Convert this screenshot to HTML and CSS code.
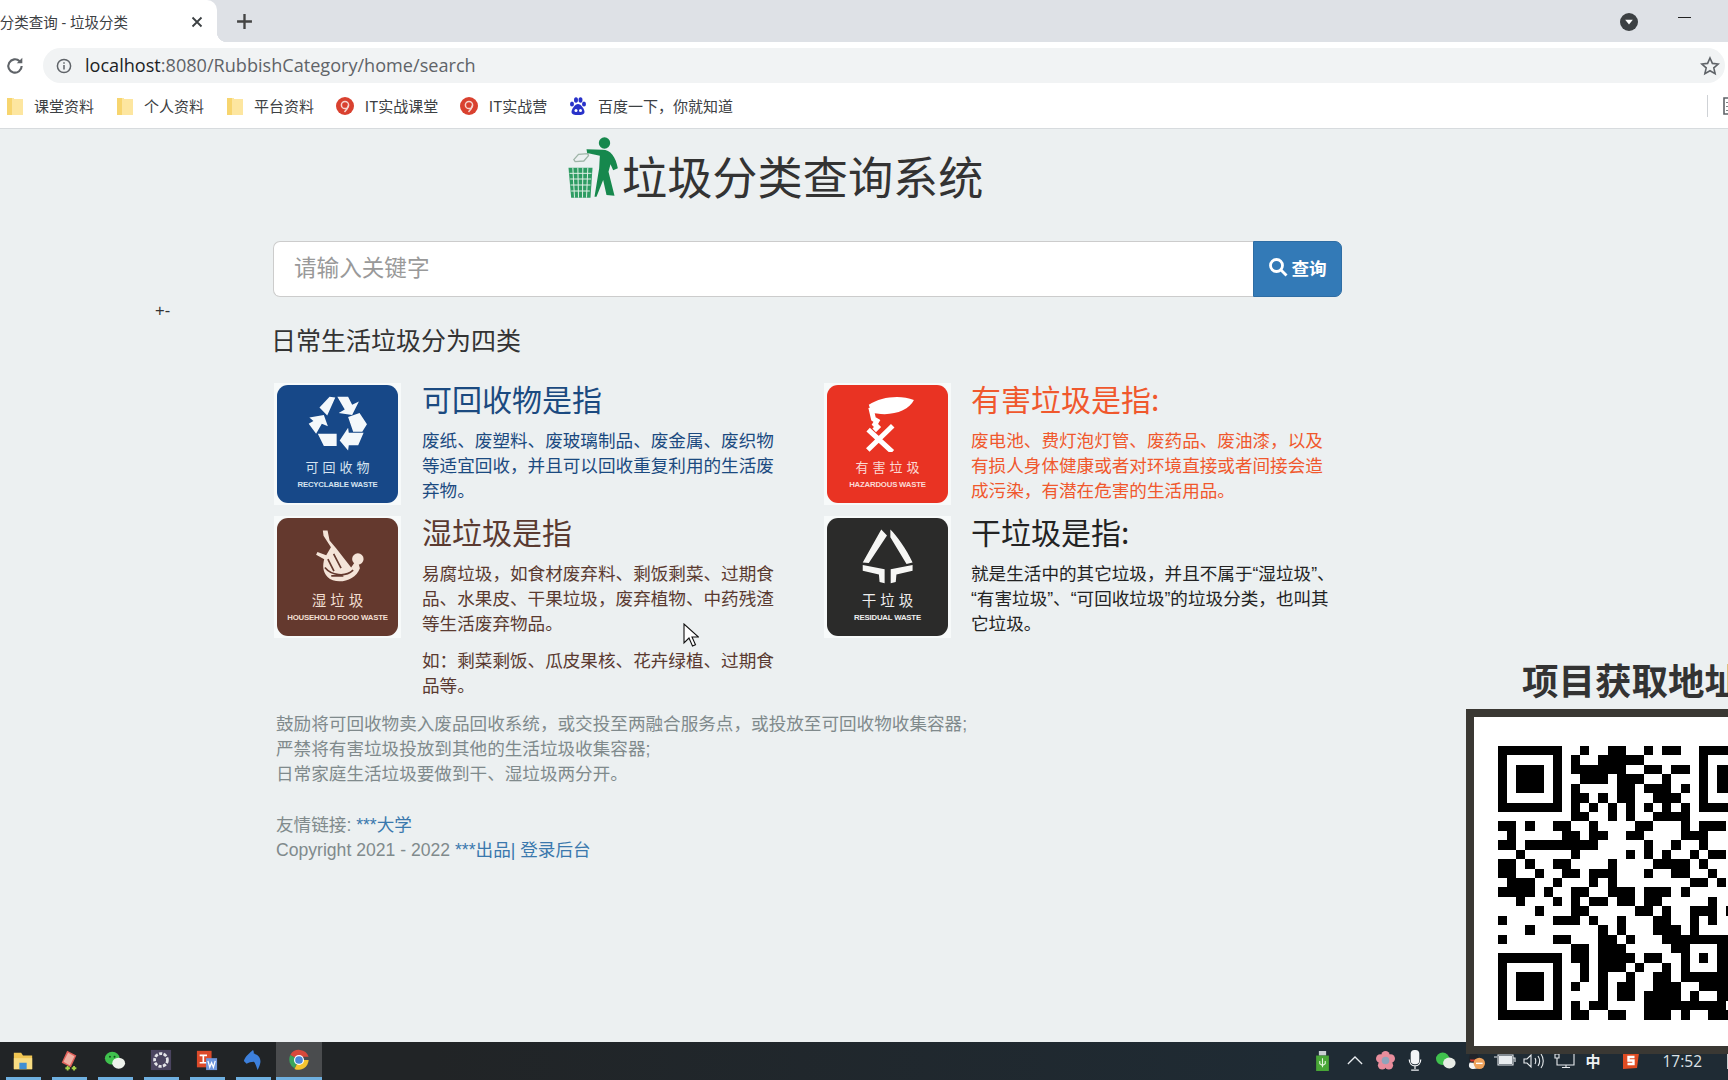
FILE: index.html
```html
<!DOCTYPE html>
<html lang="zh-CN">
<head>
<meta charset="utf-8">
<title>垃圾分类查询 - 垃圾分类</title>
<link rel="stylesheet" href="styles.css">
</head>
<body>
<div class="screen">
  <div class="tabstrip">
    <div class="tab">
      <span class="tab-title">垃圾分类查询 - 垃圾分类</span>
      <svg class="tab-close" viewBox="0 0 12 12"><path d="M1.5 1.5l9 9M10.5 1.5l-9 9"/></svg>
    </div>
    <svg class="tab-new" viewBox="0 0 16 16"><path d="M8 1v14M1 8h14"/></svg>
    <div class="strip-right">
      <svg class="profile" viewBox="0 0 18 18"><circle cx="9" cy="9" r="9" fill="#3c4043"/><path d="M5.2 6.8h7.6L9 11.6z" fill="#fff"/></svg>
      <span class="minimize"></span>
    </div>
  </div>

  <div class="toolbar">
    <svg class="reload" viewBox="0 0 18 18"><path d="M15 9a6 6 0 1 1-1.8-4.3" /><path class="solid" d="M15.6 1.6v5h-5z"/></svg>
    <div class="omnibox">
      <svg class="info" viewBox="0 0 16 16"><circle cx="8" cy="8" r="6.6"/><path d="M8 7v4.6M8 4.2v1.6"/></svg>
      <span class="url"><span class="host">localhost</span>:8080/RubbishCategory/home/search</span>
      <svg class="star" viewBox="0 0 20 20"><path d="M10 2l2.4 5.4 5.8.6-4.4 3.9 1.3 5.8L10 14.7l-5.1 3 1.3-5.8L1.8 8l5.8-.6z"/></svg>
    </div>
  </div>

  <div class="bookmarks">
    <a class="bm"><svg class="bm-folder" viewBox="0 0 16 18"><path d="M0 1h7v1h9v16H0z" fill="#fde6a0"/><path d="M0 1h5v17H0z" fill="#f7d56f"/></svg>课堂资料</a>
    <a class="bm"><svg class="bm-folder" viewBox="0 0 16 18"><path d="M0 1h7v1h9v16H0z" fill="#fde6a0"/><path d="M0 1h5v17H0z" fill="#f7d56f"/></svg>个人资料</a>
    <a class="bm"><svg class="bm-folder" viewBox="0 0 16 18"><path d="M0 1h7v1h9v16H0z" fill="#fde6a0"/><path d="M0 1h5v17H0z" fill="#f7d56f"/></svg>平台资料</a>
    <a class="bm"><svg class="bm-icon" viewBox="0 0 18 18"><circle cx="9" cy="9" r="9" fill="#d9412f"/><circle cx="9" cy="8" r="3.6" fill="none" stroke="#f6d5cf" stroke-width="1.5"/><path d="M12.5 8.500C12 11 10.500 13 8.500 15" fill="none" stroke="#f6d5cf" stroke-width="1.5"/></svg>IT实战课堂</a>
    <a class="bm"><svg class="bm-icon" viewBox="0 0 18 18"><circle cx="9" cy="9" r="9" fill="#d9412f"/><circle cx="9" cy="8" r="3.6" fill="none" stroke="#f6d5cf" stroke-width="1.5"/><path d="M12.5 8.500C12 11 10.500 13 8.500 15" fill="none" stroke="#f6d5cf" stroke-width="1.5"/></svg>IT实战营</a>
    <a class="bm"><svg class="bm-icon" viewBox="0 0 18 18"><g fill="#2932c9"><ellipse cx="3" cy="7" rx="2" ry="2.6"/><ellipse cx="7" cy="3" rx="2" ry="2.8"/><ellipse cx="11.5" cy="3" rx="2" ry="2.8"/><ellipse cx="15" cy="7" rx="2" ry="2.6"/><path d="M9 7c3 0 6.500 5 6.500 8 0 2.500-3 3-6.500 3s-6.500-.5-6.500-3c0-3 3.500-8 6.500-8z"/></g><circle cx="7" cy="13.500" r="1.500" fill="#fff"/><circle cx="11.500" cy="13.500" r="1.500" fill="#fff"/></svg>百度一下，你就知道</a>
    <span class="bm-sep"></span>
    <svg class="bm-list" viewBox="0 0 14 18"><path d="M1 1h18v16H1zM4 5v1M4 9v1M4 13v1"/></svg>
  </div>

  <main class="page">
    <aside class="stray">+-</aside>
    <div class="content">
      <header class="brand">
        <svg class="brand-logo" viewBox="80 30 155 195">
          <path d="M100 104l14-16 28-2 2 6-14 16-26 2z" fill="none" stroke="#9fb5a8" stroke-width="4"/>
          <path d="M84 128h72l-6 90H92z" fill="#2e9c63"/>
          <path d="M97 128l5 90M112 128l2 90M127 128l-1 90M142 128l-4 90M87 145h66M89 162h63M90 180h60M92 198h56" stroke="#dff0e6" stroke-width="3"/>
          <circle cx="192" cy="54" r="17" fill="#16884d"/>
          <path d="M138 73L186 74C210 74 226 95 232 130L218 136 210 118 204 140 222 212 198 210 188 165 168 215 162 215 176 130 178 92 140 84Z" fill="#16884d"/>
        </svg>
        <h1 class="brand-title">垃圾分类查询系统</h1>
      </header>

      <form class="search">
        <input class="search-input" type="text" placeholder="请输入关键字">
        <button class="search-btn" type="button">
          <svg viewBox="0 0 20 20"><circle cx="8.500" cy="8.500" r="6"/><path d="M13 13l5.500 5.500"/></svg>查询
        </button>
      </form>

      <h2 class="intro">日常生活垃圾分为四类</h2>

      <section class="grid">
        <article class="item item-blue">
          <div class="thumb"><div class="sign sign-blue">
            <svg class="picto" viewBox="125 60 190 172"><path fill="#f4f8fb" d="M165 100L195 68 212 70 188 124ZM218 68L250 68 262 92 282 82 262 122 222 116 240 106ZM250 128L284 116 306 150 292 172 265 172ZM296 175L252 175 250 160 225 198 250 228 252 212 280 212ZM160 178L216 178 216 214 178 214ZM135 130L178 122 190 156 172 148 155 178 133 148 147 140Z"/></svg>
            <div class="sign-cn">可回收物</div><div class="sign-en">RECYCLABLE WASTE</div>
          </div></div>
          <div class="item-body">
            <h3>可回收物是指</h3>
            <p>废纸、废塑料、废玻璃制品、废金属、废织物等适宜回收，并且可以回收重复利用的生活废弃物。</p>
          </div>
        </article>

        <article class="item item-red">
          <div class="thumb"><div class="sign sign-red">
            <svg class="picto" viewBox="130 60 190 172"><path fill="#fff" d="M168 92C205 68 262 62 302 78 288 108 240 126 192 118L176 116Z"/><path d="M174 100l8 34 10 6-6 10 8 8-10 10M165 226l74-72M166 166l72 66" stroke="#fff" stroke-width="15" fill="none"/></svg>
            <div class="sign-cn">有害垃圾</div><div class="sign-en">HAZARDOUS WASTE</div>
          </div></div>
          <div class="item-body">
            <h3>有害垃圾是指:</h3>
            <p>废电池、费灯泡灯管、废药品、废油漆，以及有损人身体健康或者对环境直接或者间接会造成污染，有潜在危害的生活用品。</p>
          </div>
        </article>

        <article class="item item-brown">
          <div class="thumb"><div class="sign sign-brown">
            <svg class="picto" viewBox="130 455 190 172"><g fill="#f4e4d8"><circle cx="284" cy="550" r="17"/><path d="M180 465l14 0 6 30 20 24 44 56 18-26 8 28c-14 40-72 50-96 26-16-16-14-36-10-52l-24-14 4-8 26 10 14-24-22-34z"/></g><path d="M186 575c20 24 60 30 84 8M212 535l22 42M195 550l18 36M205 600h36" stroke="#64392e" stroke-width="5" fill="none"/></svg>
            <div class="sign-cn sign-cn-wide">湿垃圾</div><div class="sign-en">HOUSEHOLD FOOD WASTE</div>
          </div></div>
          <div class="item-body">
            <h3>湿垃圾是指</h3>
            <p>易腐垃圾，如食材废弃料、剩饭剩菜、过期食品、水果皮、干果垃圾，废弃植物、中药残渣等生活废弃物品。</p>
            <p>如：剩菜剩饭、瓜皮果核、花卉绿植、过期食品等。</p>
          </div>
        </article>

        <article class="item item-dark">
          <div class="thumb"><div class="sign sign-dark">
            <svg class="picto" viewBox="130 465 190 172"><path fill="#f6f6f4" d="M205 472L222 490 168 572 150 570ZM232 472C250 490 280 530 298 570L280 575 232 495ZM150 578L215 590 215 632 200 628 198 606 150 595ZM298 578L233 590 233 632 248 628 250 606 298 595Z"/></svg>
            <div class="sign-cn sign-cn-wide">干垃圾</div><div class="sign-en">RESIDUAL WASTE</div>
          </div></div>
          <div class="item-body">
            <h3>干垃圾是指:</h3>
            <p>就是生活中的其它垃圾，并且不属于“湿垃圾”、“有害垃圾”、“可回收垃圾”的垃圾分类，也叫其它垃圾。</p>
          </div>
        </article>
      </section>

      <p class="notes">鼓励将可回收物卖入废品回收系统，或交投至两融合服务点，或投放至可回收物收集容器;<br>严禁将有害垃圾投放到其他的生活垃圾收集容器;<br>日常家庭生活垃圾要做到干、湿垃圾两分开。</p>
      <footer class="foot">友情链接: <a>***大学</a><br>Copyright 2021 - 2022 <a>***出品</a><a>| 登录后台</a></footer>
    </div>
  </main>

  <div class="taskbar">
    <div class="task"><svg viewBox="0 0 24 24"><path d="M2 4h8l2 3h10v15H2z" fill="#f0c552"/><path d="M2 10h20v12H2z" fill="#f7dc82"/><path d="M8 15h8v7H8z" fill="#3f8fd2"/></svg></div>
    <div class="task"><svg viewBox="0 0 24 24"><path d="M4 15L10 2l10 5-6 13z" fill="#e0605a"/><path d="M6 14l5-10 7 4-5 10z" fill="#eeb0a4"/><path d="M8 21h5M10.500 18.500v5M15 21h5M17.500 18.500v5" stroke="#a8d24a" stroke-width="2"/></svg></div>
    <div class="task"><svg viewBox="0 0 24 24"><ellipse cx="9" cy="10" rx="8" ry="7" fill="#3fc14d"/><ellipse cx="16" cy="15.500" rx="7" ry="6" fill="#eef2ec"/><circle cx="6.500" cy="8.500" r="1.100" fill="#14501f"/><circle cx="11.500" cy="8.500" r="1.100" fill="#14501f"/></svg></div>
    <div class="task"><svg viewBox="0 0 24 24"><rect x="1" y="1" width="22" height="22" fill="#4b4560"/><circle cx="12" cy="12" r="7" fill="none" stroke="#e4e4e8" stroke-width="3" stroke-dasharray="3.500 1.500"/></svg></div>
    <div class="task"><svg viewBox="0 0 24 24"><path d="M1 2h16v18H1z" fill="#dc4a2a"/><path d="M4 7h8M8 7v8M4 15h8" stroke="#fff" stroke-width="1.800"/><path d="M11 10h12v13H11z" fill="#6f96dc"/><path d="M13 13l2 7 2-5 2 5 2-7" stroke="#fff" fill="none" stroke-width="1.400"/></svg></div>
    <div class="task"><svg viewBox="0 0 24 24"><path d="M2 13C4 7 9 4 12 1c1 2 1 3 .8 4 5 1 8 5 7.200 10-.5 3-2 6-3 8-1-3-2-7-4-9-3 0-6 1-8 2z" fill="#3d80dc"/></svg></div>
    <div class="task task-active"><svg viewBox="0 0 24 24"><path d="M12 12L2.500 6.500A11 11 0 0 1 22.500 8.500H12z" fill="#d8493b"/><path d="M12 12l-5 8.900A11 11 0 0 1 2.500 6.500z" fill="#3ba55c"/><path d="M12 12h10.500A11 11 0 0 1 7 21.800z" fill="#f4c430"/><circle cx="12" cy="12" r="5.500" fill="#fff"/><circle cx="12" cy="12" r="4.200" fill="#4a86d8"/></svg></div>
    <div class="tray">
      <svg class="tray-usb" viewBox="0 0 14 22"><path d="M3 0h8v5H3z" fill="#c9cfd2"/><path d="M0 5h14v17H0z" fill="#48a636"/><path d="M7 8v10M4 11v3l3 2M10 11v3l-3 2" stroke="#e4f5dd" fill="none" stroke-width="1.200"/></svg>
      <svg class="tray-up" viewBox="0 0 18 10"><path d="M1 9l8-8 8 8"/></svg>
      <svg class="tray-flower" viewBox="0 0 20 20"><g fill="#e88d9c"><circle cx="10" cy="4.500" r="4.500"/><circle cx="15.500" cy="8" r="4.500"/><circle cx="13.500" cy="15" r="4.500"/><circle cx="6.500" cy="15" r="4.500"/><circle cx="4.500" cy="8" r="4.500"/></g><circle cx="10" cy="10" r="4" fill="#8fa4bb"/></svg>
      <svg class="tray-mic" viewBox="0 0 14 22"><rect x="2.500" y="0" width="9" height="15" rx="4" fill="#f2f4f6"/><path d="M1 10c0 9 12 9 12 0M7 16v4M3 21h8" fill="none" stroke="#f2f4f6" stroke-width="1.300"/></svg>
      <svg class="tray-wechat" viewBox="0 0 24 20"><ellipse cx="8" cy="8" rx="8" ry="7.500" fill="#3fc14d"/><ellipse cx="16" cy="13" rx="7.500" ry="6.500" fill="#e8ece6"/></svg>
      <svg class="tray-qq" viewBox="0 0 20 20"><ellipse cx="8" cy="8" rx="5" ry="7" fill="#20242a"/><path d="M4 12c-2 3-1 7 4 7s7-3 6-6z" fill="#f2f2f2"/><path d="M4 9h8l-2 2H5z" fill="#d8352a"/><circle cx="14" cy="13" r="6" fill="#eda25c"/><path d="M10.500 13h7" stroke="#fff" stroke-width="1.500"/></svg>
      <svg class="tray-line" viewBox="0 0 22 14"><path d="M1 3h3M5 1h15v10H5zM20 4h2v4" /><path class="solid" d="M6 2h13v8H6z"/></svg>
      <svg class="tray-line" viewBox="0 0 22 14"><path d="M1 5h3l4-4v12L4 9H1zM12 4c1 2 1 4 0 6M15 2c2 3 2 7 0 10M18 0c3 4 3 10 0 14"/></svg>
      <svg class="tray-line" viewBox="0 0 22 14"><path d="M2 0h4v4H2zM4 4v7h17V0M9 13.500h8M13 11v2"/></svg>
      <span class="tray-ime">中</span>
      <svg class="tray-sogou" viewBox="0 0 20 18"><path d="M2 1h16l-2 15-14 1z" fill="#e04c22"/><path d="M13.500 5H7.500v3.500h5V12h-6" fill="none" stroke="#fff" stroke-width="2.400"/></svg>
      <span class="clock">17:52</span>
      <span class="tray-end"></span>
    </div>
  </div>

  <aside class="promo">
    <div class="promo-title">项目获取地址</div>
    <div class="promo-frame">
      <svg class="qr" viewBox="0 0 25.300 29" preserveAspectRatio="none"><path d="M0 .5h7M9 .5h1M12 .5h2M16 .5h1M18 .5h2M22 .5h7M0 1.500h1M6 1.500h1M8 1.500h1M11 1.500h5M22 1.500h1M0 2.500h1M2 2.500h3M6 2.500h1M8 2.500h6M16 2.500h2M19 2.500h2M22 2.500h1M24 2.500h3M0 3.500h1M2 3.500h3M6 3.500h1M9 3.500h3M13 3.500h3M18 3.500h1M22 3.500h1M24 3.500h3M0 4.500h1M2 4.500h3M6 4.500h1M8 4.500h1M13 4.500h2M16 4.500h3M20 4.500h1M22 4.500h1M24 4.500h3M0 5.500h1M6 5.500h1M8 5.500h2M11 5.500h1M13 5.500h2M17 5.500h3M22 5.500h1M0 6.500h7M8 6.500h1M10 6.500h1M12 6.500h1M14 6.500h1M16 6.500h1M18 6.500h1M20 6.500h1M22 6.500h7M8 7.500h2M12 7.500h1M14 7.500h1M17 7.500h4M0 8.500h2M3 8.500h1M6 8.500h2M10 8.500h1M15 8.500h2M20 8.500h1M22 8.500h3M1 9.500h1M7 9.500h2M10 9.500h2M14 9.500h2M20 9.500h3M0 10.500h2M3 10.500h8M16 10.500h1M19 10.500h1M22 10.500h1M2 11.500h1M8 11.500h1M14 11.500h1M16 11.500h1M18 11.500h1M21 11.500h1M23 11.500h2M0 12.500h2M3 12.500h1M6 12.500h2M12 12.500h1M17 12.500h4M22 12.500h1M0 13.500h2M4 13.500h1M7 13.500h2M10 13.500h3M16 13.500h1M19 13.500h2M23 13.500h1M1 14.500h3M6 14.500h1M10 14.500h1M12 14.500h1M21 14.500h2M24 14.500h1M0 15.500h4M5 15.500h1M8 15.500h2M12 15.500h3M16 15.500h3M20 15.500h1M2 16.500h1M6 16.500h1M8 16.500h1M10 16.500h2M13 16.500h2M16 16.500h2M23 16.500h1M4 17.500h1M8 17.500h2M15 17.500h2M18 17.500h1M21 17.500h3M25 17.500h1M0 18.500h1M6 18.500h3M10 18.500h1M13 18.500h1M17 18.500h2M21 18.500h1M23 18.500h1M3 19.500h1M11 19.500h1M13 19.500h1M17 19.500h3M21 19.500h1M0 20.500h1M6 20.500h2M11 20.500h2M14 20.500h1M18 20.500h8M8 21.500h2M11 21.500h3M19 21.500h2M24 21.500h2M0 22.500h7M8 22.500h2M11 22.500h4M16 22.500h2M20 22.500h1M22 22.500h1M24 22.500h2M0 23.500h1M6 23.500h1M9 23.500h1M11 23.500h3M15 23.500h1M18 23.500h1M20 23.500h1M24 23.500h2M0 24.500h1M2 24.500h3M6 24.500h1M9 24.500h1M11 24.500h1M14 24.500h1M17 24.500h2M20 24.500h6M0 25.500h1M2 25.500h3M6 25.500h1M8 25.500h1M11 25.500h1M13 25.500h2M17 25.500h3M22 25.500h4M0 26.500h1M2 26.500h3M6 26.500h1M11 26.500h1M13 26.500h2M16 26.500h4M21 26.500h1M24 26.500h2M0 27.500h1M6 27.500h1M8 27.500h1M10 27.500h2M16 27.500h9M0 28.500h7M8 28.500h2M12 28.500h2M16 28.500h3M20 28.500h1M23 28.500h3"/></svg>
    </div>
  </aside>

  <svg class="cursor" viewBox="0 0 16 24"><path d="M1 1v19l5-5 3.500 8 3-1.300L9 14h6.500z"/></svg>
</div>
</body>
</html>
```
FILE: styles.css
```css
* { box-sizing: border-box; }
html, body { margin: 0; padding: 0; }
body {
  font-family: "Liberation Sans", "Noto Sans CJK SC", sans-serif;
  color: #333;
  overflow: hidden;
}
.screen {
  position: relative;
  width: 1728px;
  height: 1080px;
  overflow: hidden;
  display: flex;
  flex-direction: column;
  background: #ecf0f1;
}

/* browser tabs */
.tabstrip {
  height: 42px;
  flex: none;
  display: flex;
  align-items: center;
  background: #dee1e6;
}
.tab {
  position: relative;
  width: 217px;
  height: 42px;
  flex: none;
  display: flex;
  align-items: center;
  justify-content: flex-end;
  padding-right: 14px;
  background: #fff;
  border-top-right-radius: 10px;
  font-family: "Noto Sans", "Noto Sans CJK SC", sans-serif;
  font-size: 14.5px;
  color: #3c4043;
}
.tab::after {
  content: "";
  position: absolute;
  right: -10px;
  bottom: 0;
  width: 10px;
  height: 10px;
  background: radial-gradient(circle at 100% 0, transparent 10px, #fff 10.5px);
}
.tab-title { white-space: nowrap; flex: none; margin-right: 75px; }
.tab-close { position: absolute; right: 14px; top: 16px; width: 12px; height: 12px; }
.tab-close path { stroke: #3c4043; stroke-width: 1.8; fill: none; }
.tab-new { width: 17px; height: 17px; margin-left: 19px; }
.tab-new path { stroke: #444; stroke-width: 2.2; fill: none; }
.strip-right {
  margin-left: auto;
  display: flex;
  align-items: center;
  gap: 40px;
  padding-right: 37px;
}
.profile { width: 18px; height: 18px; margin-top: 2px; }
.minimize { width: 13px; height: 1px; background: #222; margin-top: -8px; }

/* browser toolbar */
.toolbar {
  height: 44px;
  flex: none;
  display: flex;
  align-items: center;
  padding: 6px 3px 3px 0;
  background: #fff;
}
.reload { width: 20px; height: 20px; margin: 0 18px 0 5px; flex: none; }
.reload path { fill: none; stroke: #5f6368; stroke-width: 1.9; }
.reload path.solid { fill: #5f6368; stroke: none; }
.omnibox {
  flex: 1;
  height: 35px;
  display: flex;
  align-items: center;
  padding: 0 5px 0 13px;
  border-radius: 18px;
  background: #f1f3f4;
}
.info { width: 16px; height: 16px; flex: none; margin-right: 13px; }
.info circle, .info path { fill: none; stroke: #5f6368; stroke-width: 1.500; }
.url {
  font-family: "Open Sans", sans-serif;
  font-size: 18.1px;
  line-height: 24px;
  margin-top: -2px;
  color: #5f6368;
}
.host { color: #202124; }
.star { width: 20px; height: 20px; margin-left: auto; }
.star path { fill: none; stroke: #5f6368; stroke-width: 1.600; }

/* bookmarks */
.bookmarks {
  height: 43px;
  flex: none;
  display: flex;
  align-items: center;
  gap: 23px;
  padding: 0 0 3px 7px;
  background: #fff;
  border-bottom: 1px solid #d7dbde;
}
.bm {
  display: flex;
  align-items: center;
  gap: 11px;
  font-family: "Noto Sans CJK SC", sans-serif;
  font-size: 15px;
  color: #3c4043;
  white-space: nowrap;
}
.bm-folder { width: 16px; height: 18px; }
.bm-icon { width: 18px; height: 18px; margin-left: -1.3px; }
.bm-sep { width: 1px; height: 22px; margin-left: auto; background: #cfd2d6; }
.bm-list { width: 14px; height: 18px; margin-right: -9px; margin-left: -8px; overflow: visible; }
.bm-list path { fill: none; stroke: #5f6368; stroke-width: 1.600; }

/* page */
.page {
  flex: 1;
  min-height: 0;
  display: grid;
  grid-template-columns: 273px 1069px;
  align-content: start;
  background: #ecf0f1;
}
.stray {
  padding: 171px 0 0 155px;
  font-size: 16.5px;
  line-height: 20px;
  color: #333;
}
.brand {
  height: 112px;
  display: flex;
  align-items: flex-start;
  padding-left: 294px;
}
.brand-logo { width: 52px; height: 65px; margin-top: 6px; flex: none; }
.brand-title {
  margin: 15px 0 0 3px;
  font-family: "Noto Sans CJK SC", sans-serif;
  font-weight: 400;
  font-size: 45.2px;
  line-height: 64px;
  color: #333;
  white-space: nowrap;
}
.search { display: flex; height: 56px; }
.search-input {
  flex: 1;
  min-width: 0;
  height: 56px;
  padding: 0 20px 5px;
  border: 1px solid #ccc;
  border-right: 0;
  border-radius: 7px 0 0 7px;
  background: #fff;
  font-family: "Noto Sans CJK SC", sans-serif;
  font-size: 22.6px;
  outline: none;
}
.search-input::placeholder { color: #999; opacity: 1; }
.search-btn {
  width: 89px;
  flex: none;
  display: flex;
  align-items: center;
  justify-content: center;
  gap: 3px;
  border: 1px solid #2e6da4;
  border-radius: 0 7px 7px 0;
  background: #337ab7;
  color: #fff;
  font-family: "Noto Sans CJK SC", sans-serif;
  font-weight: 700;
  font-size: 17.6px;
  padding: 0 0 4px;
}
.search-btn svg { width: 20px; height: 20px; }
.search-btn circle, .search-btn path { fill: none; stroke: #fff; stroke-width: 2.800; }
.intro {
  margin: 25px 0 26px -2px;
  font-family: "Noto Sans CJK SC", sans-serif;
  font-weight: 400;
  font-size: 25px;
  line-height: 35px;
  color: #333;
}
.grid {
  display: grid;
  grid-template-columns: 550px 518px;
  row-gap: 11px;
  margin-left: 1px;
}
.item { display: flex; align-items: flex-start; gap: 21px; }
.item-red, .item-dark { gap: 20px; }
.thumb {
  width: 127px;
  height: 122px;
  flex: none;
  padding: 2px 3px;
  background: #f7fafa;
}
.sign {
  height: 100%;
  border-radius: 11px;
  display: flex;
  flex-direction: column;
  align-items: center;
  padding-top: 9px;
  overflow: hidden;
}
.sign-blue { background: #174888; color: #d5e3f0; }
.sign-red { background: #e93323; color: #fbdad5; }
.sign-brown { background: #64392e; color: #f2dfd2; }
.sign-dark { background: #2b2b2a; color: #eee; }
.picto { width: 64px; height: 58px; flex: none; }
.sign-cn {
  margin-top: 6px;
  font-family: "Noto Sans CJK SC", sans-serif;
  font-size: 13px;
  line-height: 17px;
  letter-spacing: 4px;
  margin-right: -4px;
  white-space: nowrap;
}
.sign-cn-wide { font-size: 14.5px; letter-spacing: 4px; }
.sign-en {
  margin-top: 5px;
  font-size: 7.8px;
  line-height: 10px;
  font-weight: 700;
  letter-spacing: -0.2px;
  white-space: nowrap;
}
.item-body { width: 366px; }
.item-body h3 {
  margin: -2px 0 13.5px;
  font-family: "Noto Sans CJK SC", sans-serif;
  font-weight: 400;
  font-size: 30px;
  line-height: 34px;
  white-space: nowrap;
}
.item-body p {
  margin: 0 0 12px;
  font-size: 17.6px;
  line-height: 25px;
}
.item-blue { color: #1b4a80; }
.item-red { color: #f0582d; }
.item-brown { color: #5a3a30; }
.item-dark { color: #232323; }
.item-body p:last-child { margin-bottom: 0; }
.notes {
  margin: 13px 0 0 3px;
  font-size: 17.6px;
  line-height: 25.2px;
  color: #808a8c;
  white-space: nowrap;
}
.foot {
  margin: 26px 0 0 3px;
  font-size: 17.6px;
  line-height: 25.2px;
  color: #808a8c;
}
.foot a { color: #3a78ad; }

/* taskbar */
.taskbar {
  height: 38px;
  flex: none;
  display: flex;
  align-items: stretch;
  padding-left: 0;
  background: linear-gradient(90deg, #212426 0%, #212426 25%, #1f2b34 75%, #1f2b34 100%);
}
.task {
  position: relative;
  width: 46px;
  flex: none;
  display: flex;
  align-items: center;
  justify-content: center;
  padding-bottom: 2px;
}
.task svg { width: 22px; height: 22px; }
.task::after {
  content: "";
  position: absolute;
  left: 6px;
  right: 5px;
  bottom: 0;
  height: 3px;
  background: #6fb0e0;
}
.task-active { background: #4a4c4e; }
.task-active::after { left: 0; right: 0; }
.tray {
  margin-left: auto;
  display: flex;
  align-items: center;
  padding-bottom: 1px;
}
.tray svg { flex: none; }
.tray-usb { width: 13px; height: 20px; margin-right: 18px; }
.tray-up { width: 16px; height: 9px; margin-right: 13px; }
.tray-up path { fill: none; stroke: #e8ecef; stroke-width: 1.400; }
.tray-flower { width: 19px; height: 19px; margin-right: 13px; }
.tray-mic { width: 14px; height: 21px; margin-right: 14px; }
.tray-wechat { width: 20px; height: 17px; margin-right: 10px; }
.tray-qq { width: 19px; height: 19px; margin-right: 8px; }
.tray-line { width: 22px; height: 14px; margin-right: 8px; overflow: visible; }
.tray-line path { fill: none; stroke: #e8ecef; stroke-width: 1.100; }
.tray-line path.solid { fill: #e8ecef; stroke: none; }
.tray-ime {
  width: 16px;
  margin: 0 20px 0 2px;
  font-family: "Noto Sans CJK SC", sans-serif;
  font-size: 15px;
  font-weight: 700;
  line-height: 18px;
  color: #eef1f3;
}
.tray-sogou { width: 20px; height: 18px; margin-right: 21px; }
.clock {
  font-family: "Open Sans", sans-serif;
  font-size: 15.5px;
  color: #dde2e6;
  margin-right: 25px;
}
.tray-end { width: 1px; height: 16px; background: #c8cdd0; }

/* overlays */
.promo { position: absolute; left: 1466px; top: 658px; width: 300px; }
.promo-title {
  height: 51px;
  padding-left: 56px;
  font-family: "Noto Sans CJK SC", sans-serif;
  font-weight: 700;
  font-size: 36.5px;
  line-height: 44px;
  color: #333;
  white-space: nowrap;
}
.promo-frame {
  height: 345px;
  padding: 29px 0 0 24px;
  border: 8px solid #3a3833;
  background: #fff;
}
.qr { display: block; width: 231px; height: 273.500px; }
.qr path { fill: none; stroke: #000; stroke-width: 1; shape-rendering: crispEdges; }
.cursor { position: absolute; left: 683px; top: 623px; width: 16px; height: 24px; }
.cursor path { fill: #fff; stroke: #111; stroke-width: 1.100; }
```
